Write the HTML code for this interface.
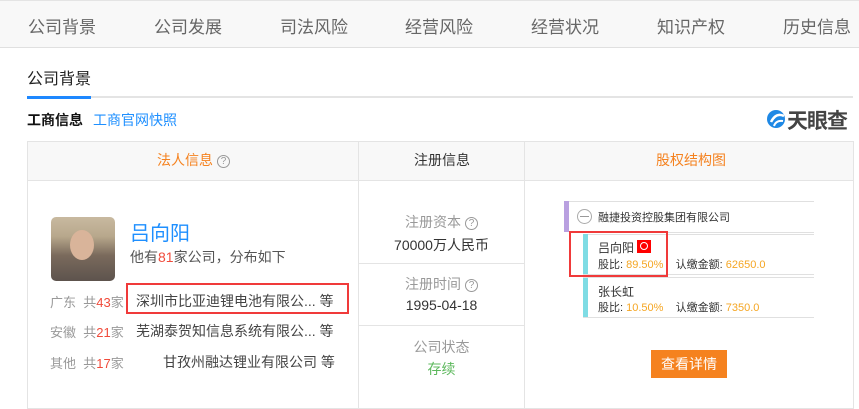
<!DOCTYPE html>
<html><head><meta charset="utf-8"><style>
*{margin:0;padding:0;box-sizing:border-box}
body{width:859px;height:409px;background:#fff;font-family:"Liberation Sans","Noto Sans CJK SC",sans-serif;position:relative;overflow:hidden;color:#333}
.a{position:absolute;white-space:nowrap}
.nav{position:absolute;left:0;top:0;width:859px;height:48px;background:#f8f8f8;border-top:1px solid #e4e4e4;border-bottom:1px solid #e0e0e0}
.nav span{position:absolute;top:12px;font-size:17px;color:#666}
.q{display:inline-block;width:13px;height:13px;border:1px solid #999;border-radius:50%;font-size:10px;line-height:11px;text-align:center;color:#999;vertical-align:1px;margin-left:4px}
.g{color:#999}.r{color:#f04b3b}.o{color:#f5a623}
</style></head><body>
<div class="nav">
<span style="left:28px">公司背景</span><span style="left:154px">公司发展</span><span style="left:280px">司法风险</span><span style="left:405px">经营风险</span><span style="left:531px">经营状况</span><span style="left:657px">知识产权</span><span style="left:783px">历史信息</span>
</div>
<div class="a" style="left:27px;top:65px;font-size:16px;color:#222">公司背景</div>
<div class="a" style="left:27px;top:96px;width:826px;height:2px;background:#e4e4e4"></div>
<div class="a" style="left:27px;top:96px;width:64px;height:3px;background:#1e88ff"></div>
<div class="a" style="left:27px;top:110px;font-size:14px;font-weight:bold;color:#111">工商信息</div>
<div class="a" style="left:93px;top:110px;font-size:14px;color:#1e8fff">工商官网快照</div>
<svg class="a" style="left:766px;top:108px" width="20" height="22" viewBox="0 0 20 22"><circle cx="10" cy="11" r="9" fill="#1e88e5"/><path d="M5 14 Q10 4 18 8" stroke="#fff" stroke-width="2.5" fill="none"/><path d="M8 18 Q10 12 17 13" stroke="#fff" stroke-width="2" fill="none"/></svg>
<div class="a" style="left:787px;top:105px;font-size:21px;font-weight:bold;color:#444;letter-spacing:-1px">天眼查</div>
<div class="a" style="left:27px;top:141px;width:827px;height:268px;border:1px solid #e4e4e4"></div>
<div class="a" style="left:28px;top:142px;width:825px;height:39px;background:#f8f8f8;border-bottom:1px solid #e4e4e4"></div>
<div class="a" style="left:358px;top:142px;width:1px;height:266px;background:#e4e4e4"></div>
<div class="a" style="left:524px;top:142px;width:1px;height:266px;background:#e4e4e4"></div>
<div class="a" style="left:359px;top:263px;width:165px;height:1px;background:#e4e4e4"></div>
<div class="a" style="left:359px;top:325px;width:165px;height:1px;background:#e4e4e4"></div>
<div class="a" style="left:157px;top:150px;font-size:14px;color:#f5821f">法人信息<span class="q">?</span></div>
<div class="a" style="left:414px;top:150px;font-size:14px;color:#333">注册信息</div>
<div class="a" style="left:656px;top:150px;font-size:14px;color:#f5821f">股权结构图</div>
<div class="a" style="left:51px;top:217px;width:64px;height:64px;border-radius:5px;background:linear-gradient(#c8b9a0 0,#b8a88c 30%,#7a6a5c 60%,#5d534d 100%)"></div>
<div class="a" style="left:70px;top:230px;width:24px;height:30px;border-radius:50%;background:#d9b49a"></div>
<div class="a" style="left:130px;top:217px;font-size:20px;color:#1e8fff">吕向阳</div>
<div class="a" style="left:130px;top:247px;font-size:14px;color:#555">他有<span class="r">81</span>家公司，分布如下</div>
<div class="a" style="left:50px;top:292px;font-size:13px" ><span class="g">广东&nbsp;&nbsp;共</span><span class="r">43</span><span class="g">家</span></div>
<div class="a" style="left:50px;top:322px;font-size:13px" ><span class="g">安徽&nbsp;&nbsp;共</span><span class="r">21</span><span class="g">家</span></div>
<div class="a" style="left:50px;top:353px;font-size:13px" ><span class="g">其他&nbsp;&nbsp;共</span><span class="r">17</span><span class="g">家</span></div>
<div class="a" style="left:136px;top:291px;font-size:14px;color:#444">深圳市比亚迪锂电池有限公... 等</div>
<div class="a" style="left:136px;top:321px;font-size:14px;color:#444">芜湖泰贺知信息系统有限公... 等</div>
<div class="a" style="left:163px;top:352px;font-size:14px;color:#444">甘孜州融达锂业有限公司 等</div>
<div class="a" style="left:126px;top:283px;width:223px;height:31px;border:2px solid #f03a3a"></div>
<div class="a" style="left:359px;top:212px;width:165px;text-align:center;font-size:14px;color:#999">注册资本<span class="q">?</span></div>
<div class="a" style="left:359px;top:235px;width:165px;text-align:center;font-size:14px;color:#333">70000万人民币</div>
<div class="a" style="left:359px;top:274px;width:165px;text-align:center;font-size:14px;color:#999">注册时间<span class="q">?</span></div>
<div class="a" style="left:359px;top:297px;width:165px;text-align:center;font-size:14px;color:#333">1995-04-18</div>
<div class="a" style="left:359px;top:337px;width:165px;text-align:center;font-size:14px;color:#999">公司状态</div>
<div class="a" style="left:359px;top:359px;width:165px;text-align:center;font-size:14px;color:#5cb85c">存续</div>
<div class="a" style="left:564px;top:201px;width:250px;height:1px;background:#e0e0e0"></div>
<div class="a" style="left:564px;top:201px;width:5px;height:31px;background:#b9a0e0"></div>
<div class="a" style="left:577px;top:209px;width:15px;height:15px;border:1px solid #aaa;border-radius:50%"></div>
<div class="a" style="left:580px;top:216px;width:9px;height:1px;background:#999"></div>
<div class="a" style="left:598px;top:209px;font-size:11px;color:#333">融捷投资控股集团有限公司</div>
<div class="a" style="left:569px;top:232px;width:245px;height:1px;background:#e0e0e0"></div>
<div class="a" style="left:583px;top:234px;width:231px;height:1px;background:#e0e0e0"></div>
<div class="a" style="left:583px;top:234px;width:5px;height:83px;background:#7fdce4"></div>
<div class="a" style="left:583px;top:274px;width:231px;height:1px;background:#e0e0e0"></div>
<div class="a" style="left:583px;top:277px;width:231px;height:1px;background:#e0e0e0"></div>
<div class="a" style="left:583px;top:317px;width:231px;height:1px;background:#e0e0e0"></div>
<div class="a" style="left:598px;top:239px;font-size:12px;color:#333">吕向阳</div>
<div class="a" style="left:637px;top:240px;width:14px;height:13px;background:#f00"><div style="position:absolute;left:3px;top:2px;width:8px;height:8px;border-radius:50%;background:#f00;border:1px solid #fff"></div></div>
<div class="a" style="left:598px;top:256px;font-size:11px;color:#333">股比: <span class="o">89.50%</span>&nbsp;&nbsp;&nbsp;&nbsp;认缴金额: <span class="o">62650.0</span></div>
<div class="a" style="left:598px;top:283px;font-size:12px;color:#333">张长虹</div>
<div class="a" style="left:598px;top:299px;font-size:11px;color:#333">股比: <span class="o">10.50%</span>&nbsp;&nbsp;&nbsp;&nbsp;认缴金额: <span class="o">7350.0</span></div>
<div class="a" style="left:569px;top:231px;width:99px;height:46px;border:2px solid #f03a3a"></div>
<div class="a" style="left:651px;top:350px;width:76px;height:28px;background:#f5821f;color:#fff;font-size:14px;text-align:center;line-height:28px">查看详情</div>
</body></html>
